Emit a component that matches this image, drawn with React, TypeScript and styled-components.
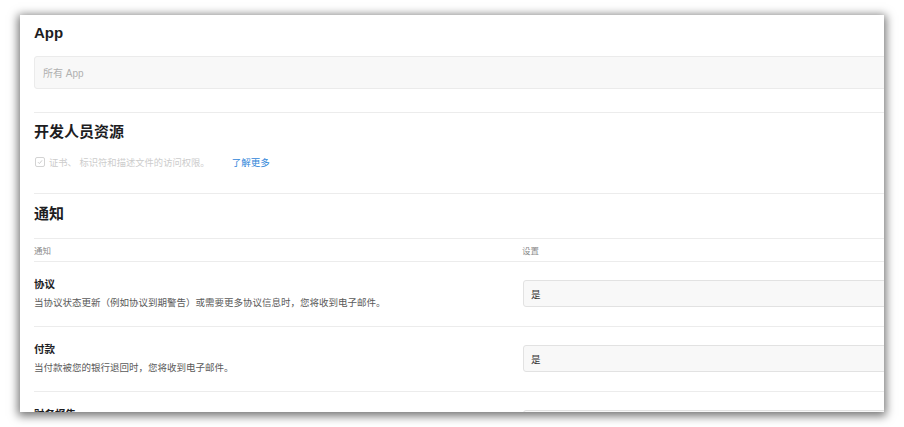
import styled, { createGlobalStyle } from 'styled-components';

const GlobalStyle = createGlobalStyle`
  html, body {
    margin: 0;
    padding: 0;
    background: #ffffff;
  }
  body {
    font-family: "Liberation Sans", "Noto Sans CJK SC", sans-serif;
    -webkit-font-smoothing: antialiased;
  }
`;

const Stage = styled.div`
  width: 904px;
  height: 427px;
  padding: 15px 20px 0 20px;
  box-sizing: border-box;
  overflow: hidden;
`;

const Window = styled.div`
  width: 864px;
  height: 397px;
  background: #fff;
  overflow: hidden;
  box-shadow: 0 2px 9px 2px rgba(0, 0, 0, 0.55);
`;

const Content = styled.div`
  width: 1100px;
  padding: 8px 0 0 14px;
`;

const Section = styled.section<{ $top: number; $bottom: number }>`
  padding: ${p => p.$top}px 0 ${p => p.$bottom}px;
  border-bottom: 1px solid #ececec;
`;

const SectionTitle = styled.h2<{ $size?: number }>`
  margin: 0;
  font-size: ${p => p.$size ?? 15}px;
  line-height: 20px;
  font-weight: 700;
  color: #1d1d1f;
`;

const SearchBox = styled.div`
  margin-top: 13px;
  height: 33px;
  box-sizing: border-box;
  background: #f8f8f8;
  border: 1px solid #ebebeb;
  border-radius: 3px;
  display: flex;
  align-items: center;
  padding-left: 8px;
  font-size: 10px;
  color: #b0b0b0;
`;

const CheckRow = styled.div`
  margin-top: 13px;
  display: flex;
  align-items: center;
  height: 14px;
  font-size: 9.3px;
  color: #cccccc;
`;

const CheckBox = styled.span`
  width: 8px;
  height: 8px;
  border: 1px solid #d3d3d3;
  border-radius: 2px;
  display: inline-flex;
  align-items: center;
  justify-content: center;
  margin: 0 4px 0 1px;
`;

const LearnMore = styled.a`
  margin-left: 22px;
  color: #2f86d9;
  text-decoration: none;
  font-size: 9.5px;
`;

const TableHead = styled.div`
  display: grid;
  grid-template-columns: 488px 1fr;
  height: 22px;
  align-items: center;
  border-bottom: 1px solid #ececec;
  font-size: 8.5px;
  color: #8a8a8a;
`;

const Row = styled.div`
  display: grid;
  grid-template-columns: 488px 1fr;
  align-items: center;
  padding: 15px 0 16px;
  border-bottom: 1px solid #ececec;
`;

const RowTitle = styled.div`
  font-size: 10.5px;
  line-height: 14px;
  font-weight: 700;
  color: #1d1d1f;
`;

const RowDesc = styled.div`
  margin-top: 5px;
  font-size: 9.5px;
  line-height: 14px;
  color: #5a5a5a;
`;

const Select = styled.div`
  margin-left: 1px;
  height: 27px;
  box-sizing: border-box;
  background: #f8f8f8;
  border: 1px solid #e2e2e2;
  border-radius: 3px;
  display: flex;
  align-items: center;
  padding-left: 7px;
  font-size: 9.5px;
  color: #333;
`;

const notices = [
  {
    title: '协议',
    desc: '当协议状态更新（例如协议到期警告）或需要更多协议信息时，您将收到电子邮件。',
  },
  {
    title: '付款',
    desc: '当付款被您的银行退回时，您将收到电子邮件。',
  },
  {
    title: '财务报告',
    desc: '当新的财务报告可供下载时，您将收到电子邮件。',
  },
];

function App() {
  return (
    <>
      <GlobalStyle />
      <Stage>
        <Window>
          <Content>
            <Section $top={0} $bottom={23}>
              <SectionTitle>App</SectionTitle>
              <SearchBox>所有 App</SearchBox>
            </Section>

            <Section $top={9} $bottom={24}>
              <SectionTitle $size={15}>开发人员资源</SectionTitle>
              <CheckRow>
                <CheckBox>
                  <svg width="6" height="6" viewBox="0 0 6 6">
                    <path d="M1 3.2 L2.4 4.6 L5 1.4" fill="none" stroke="#cccccc" strokeWidth="1" />
                  </svg>
                </CheckBox>
                证书、 标识符和描述文件的访问权限。
                <LearnMore href="#">了解更多</LearnMore>
              </CheckRow>
            </Section>

            <Section $top={10} $bottom={14}>
              <SectionTitle $size={15}>通知</SectionTitle>
            </Section>

            <TableHead>
              <span>通知</span>
              <span>设置</span>
            </TableHead>

            {notices.map(n => (
              <Row key={n.title}>
                <div>
                  <RowTitle>{n.title}</RowTitle>
                  <RowDesc>{n.desc}</RowDesc>
                </div>
                <Select>是</Select>
              </Row>
            ))}
          </Content>
        </Window>
      </Stage>
    </>
  );
}

export default App;
